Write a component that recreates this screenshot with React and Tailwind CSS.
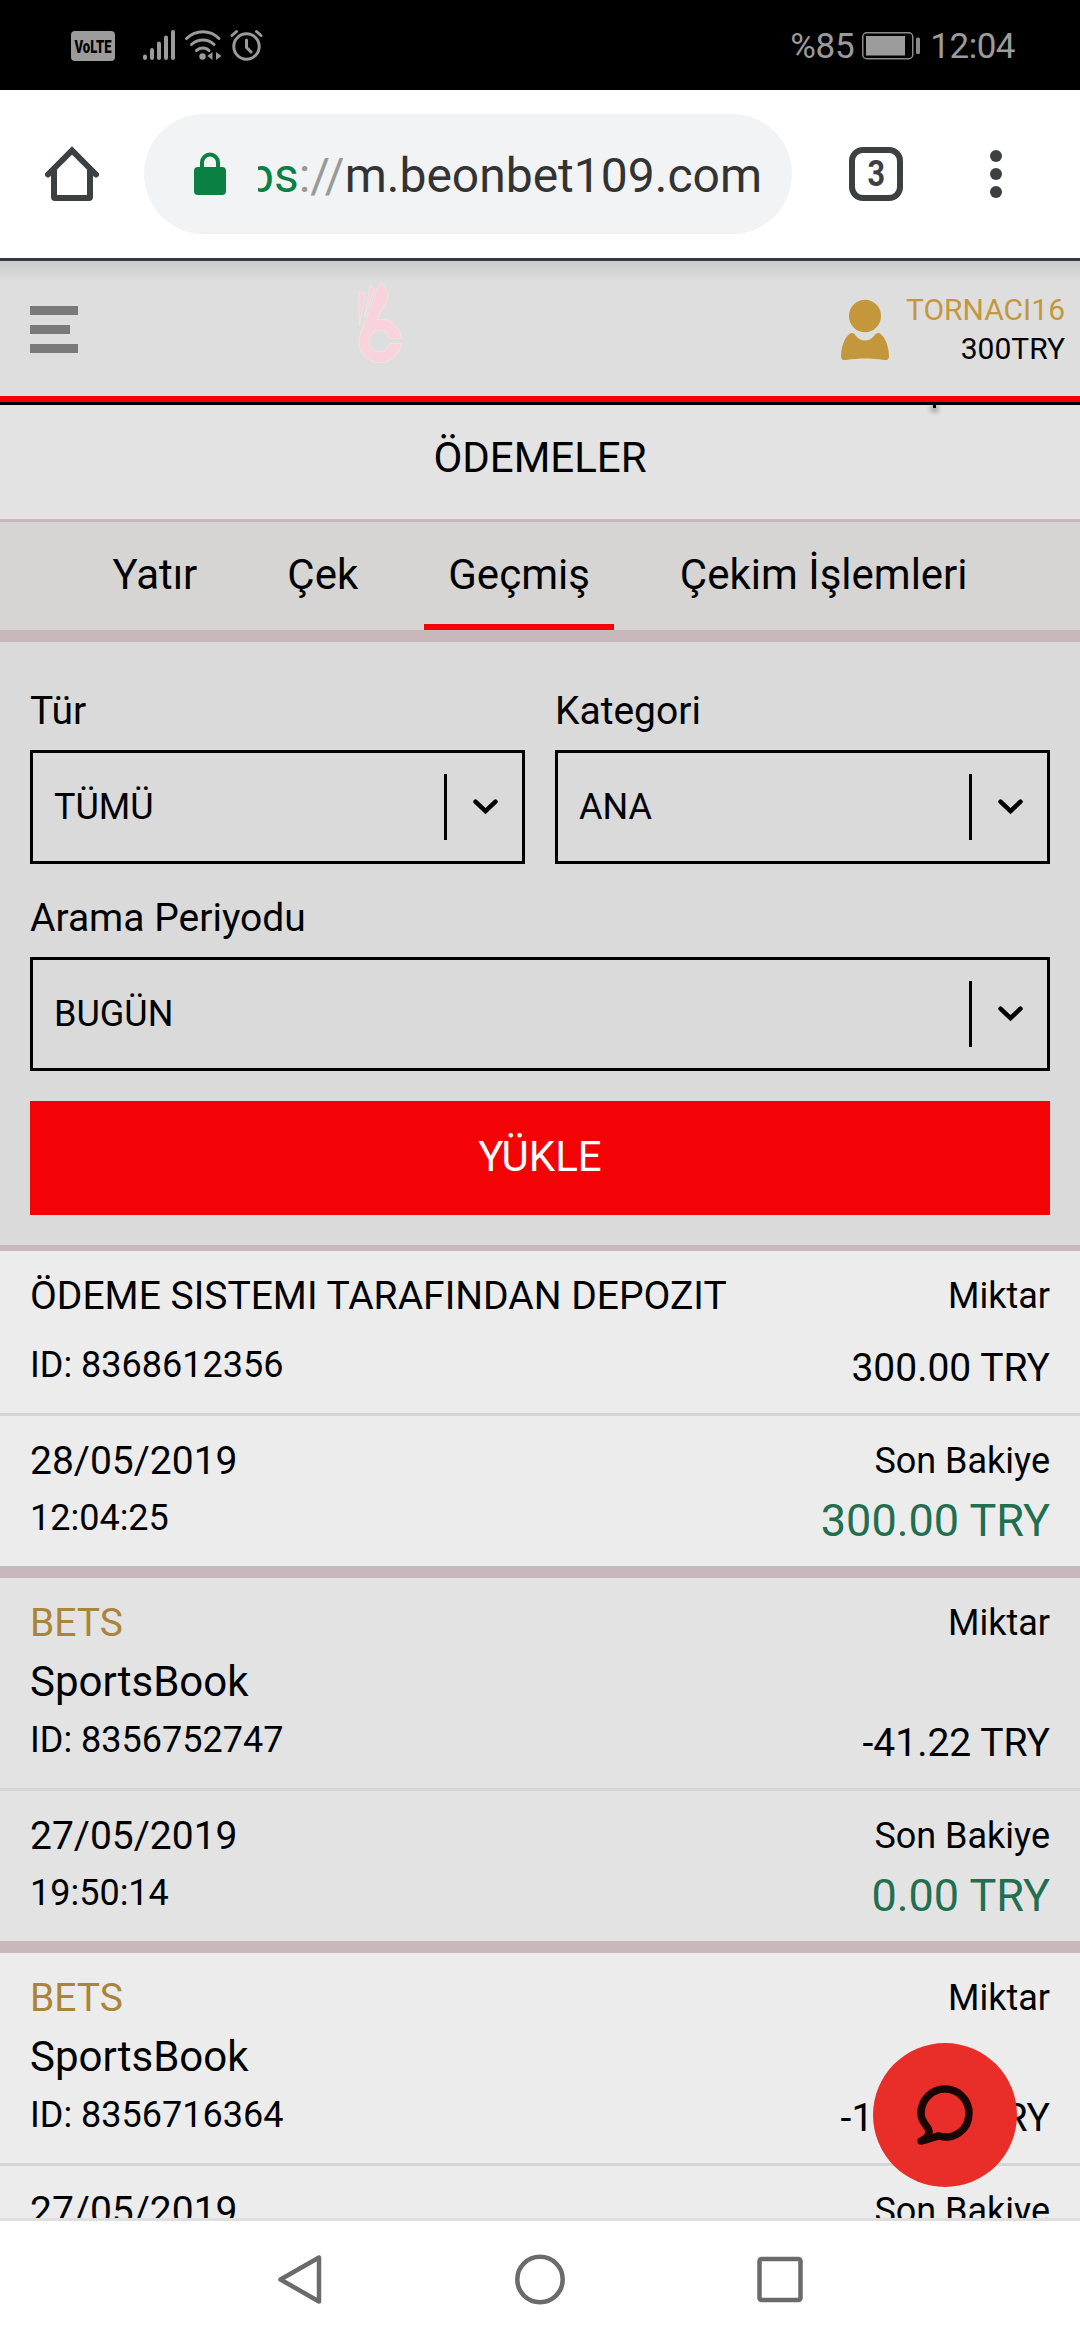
import React, { useState } from "react";

const tabs = ["Yatır", "Çek", "Geçmiş", "Çekim İşlemleri"];

const transactions = [
    {
        title: "ÖDEME SISTEMI TARAFINDAN DEPOZIT",
        id: "8368612356",
        amount: "300.00",
        date: "28/05/2019",
        time: "12:04:25",
        balance: "300.00",
    },
    {
        title: "BETS",
        product: "SportsBook",
        id: "8356752747",
        amount: "-41.22",
        date: "27/05/2019",
        time: "19:50:14",
        balance: "0.00",
    },
    {
        title: "BETS",
        product: "SportsBook",
        id: "8356716364",
        amount: "-100.00",
        date: "27/05/2019",
        time: "19:42:51",
        balance: "41.22",
    },
];

const StatusBar = () => (
    <div className="flex h-[90px] shrink-0 items-center justify-between bg-black pl-[71px] pr-[65px] text-[#9b9b9b]">
        <div className="flex items-center">
            <svg className="mt-0.5" width="44" height="30" viewBox="0 0 44 30">
                <rect width="44" height="30" rx="4" fill="#9b9b9b" />
                <text
                    x="3.5"
                    y="21.5"
                    textLength="37"
                    lengthAdjust="spacingAndGlyphs"
                    fontSize="19"
                    fontWeight="900"
                    fontFamily="Roboto, sans-serif"
                    fill="#000"
                >
                    VoLTE
                </text>
            </svg>
            <svg className="ml-[27px]" width="34" height="32" viewBox="0 0 34 32" stroke="currentColor" strokeWidth="4" strokeLinecap="round">
                <path d="M3 27.5v1.5M10 21v8M17 14.500v14.500M24 8.500v20.500M31 3v26" />
            </svg>
            <svg className="ml-2" width="38" height="32" viewBox="0 0 38 32" fill="none" stroke="currentColor" strokeWidth="3" strokeLinecap="round">
                <path d="M2.500 9.500C12 0.500 26 0.500 35 9.500M7.500 15.500C14 9.500 24 9.500 30 15.500M12.500 21.500C16 18 22 18 25 21.500" />
                <circle cx="18.500" cy="27.500" r="3.200" fill="currentColor" stroke="none" />
                <path d="M28.500 23v8l-5-4zM32 23v8l5.500-4z" fill="currentColor" stroke="none" />
            </svg>
            <svg className="ml-2" width="33" height="32" viewBox="0 0 33 32" fill="none" stroke="currentColor" strokeWidth="3" strokeLinecap="round">
                <circle cx="16.500" cy="17.500" r="12.700" />
                <path d="M16.500 11v7.500l4.500 4.500M2 6.500l4.500-4M31 6.500l-4.500-4" />
            </svg>
        </div>
        <div className="flex items-center pt-0.5 text-[35px] leading-none">
            <span className="tracking-[-0.3px]">%85</span>
            <svg className="ml-2 mr-[9px]" width="59" height="28" viewBox="0 0 59 28" fill="none">
                <rect x="0.750" y="0.750" width="50" height="26" rx="4" stroke="#8a8a8a" strokeWidth="1.500" />
                <rect x="4" y="4" width="39" height="19.500" fill="#9b9b9b" />
                <rect x="54" y="5.500" width="4" height="16.500" rx="1.500" fill="#8a8a8a" />
            </svg>
            <span className="tracking-[-0.5px]">12:04</span>
        </div>
    </div>
);

const BrowserBar = () => (
    <div className="flex h-[171px] shrink-0 items-center border-b-[3px] border-[#343a43] bg-white pl-[45px] pr-[78px]">
        <svg width="54" height="56" viewBox="0 0 54 56" fill="none" stroke="#3c4043" strokeWidth="6">
            <path d="M3 28.500L27 4.500l24 24" strokeLinecap="round" />
            <path d="M9 24v27q0 1 1 1h34q1 0 1-1V24" />
        </svg>
        <div className="ml-[45px] flex h-[120px] w-[648px] items-center rounded-full bg-[#f1f3f4] pl-[50px] pr-[30px]">
            <svg width="32" height="44" viewBox="0 0 32 44">
                <path d="M8 16v-5.500a8 8 0 0 1 16 0V16" fill="none" stroke="#0b8043" strokeWidth="4" />
                <rect y="15" width="32" height="28" rx="4" fill="#0b8043" />
            </svg>
            <div className="ml-8 flex flex-1 justify-end overflow-hidden pt-1 text-[48px] leading-[60px] whitespace-nowrap">
                <span className="text-[#0b8043]">https</span>
                <span className="text-[#999]">://</span>
                <span className="text-[#333]">m.beonbet109.com</span>
            </div>
        </div>
        <div className="ml-[57px] flex h-[54px] w-[54px] items-center justify-center rounded-[14px] border-[6px] border-[#3c4043] text-[36px] font-bold leading-none text-[#3c4043]">
            <span className="inline-block scale-x-85">3</span>
        </div>
        <div className="ml-auto flex flex-col gap-1.5">
            <span className="h-3 w-3 rounded-full bg-[#3c4043]" />
            <span className="h-3 w-3 rounded-full bg-[#3c4043]" />
            <span className="h-3 w-3 rounded-full bg-[#3c4043]" />
        </div>
    </div>
);

const SiteHeader = () => (
    <div className="relative flex h-[144px] shrink-0 border-b-[3px] border-black bg-[#dedede]">
        <div className="flex w-full border-b-[6px] border-[#f20305] bg-linear-to-b from-[#cacaca] to-transparent to-[20px] pl-[30px] pr-[15px]">
            <div className="flex flex-col gap-2.5 pt-[45px]">
                <span className="h-[9px] w-12 bg-[#7a7a7a]" />
                <span className="h-[9px] w-10 bg-[#7a7a7a]" />
                <span className="h-[9px] w-12 bg-[#7a7a7a]" />
            </div>
            <svg className="ml-[277px] mt-[19px]" width="50" height="85" viewBox="75 30 150 255" fill="#f8d3db" stroke="#f7e9ec" strokeWidth="1.500">
                <path d="M152 40C165 47 174 62 173 80C170 102 150 125 142 149C180 142 212 170 213 206L180 206C175 190 163 181 149 181A32 32 0 1 0 180 220L213 220C210 255 180 278 149 278C112 278 86 247 87 212C88 193 96 180 103 160C115 130 125 98 137 65C142 52 146 44 152 40Z" />
                <path d="M119 47L132 56L129 68L103 142L113 90ZM87 64L105 71L101 102L88 165Z" />
            </svg>
            <svg className="ml-auto mt-[38px]" width="48" height="62" viewBox="0 0 48 62" fill="#c4973d">
                <ellipse cx="24" cy="17" rx="16" ry="16.300" />
                <path d="M9 34.500C11 33.500 13 34 15 37C20 43 28 43 33 37C35 34 37 33.500 39 34.500C44.500 38 48 49 48 57C48 60.500 46 61.500 43 61C30 59 18 59 5 61C2 61.500 0 60.500 0 57C0 49 3.500 38 9 34.500Z" />
            </svg>
            <div className="ml-[17px] flex flex-col pt-[29px] text-right text-[30px] leading-[39px]">
                <span className="text-[#c4973d]">TORNACI16</span>
                <span>300TRY</span>
            </div>
        </div>
        <span className="absolute left-[933px] top-[144px] h-[3px] w-[3px] bg-black shadow-[0_2px_5px_2px_rgba(0,0,0,0.3)]" />
    </div>
);

const SelectField = ({ label, value }) => (
    <div className="flex flex-1 flex-col">
        <label className="mb-[9px] h-[60px] text-[39px] leading-[60px]">{label}</label>
        <div className="flex h-[114px] items-center border-[3px] border-black pl-[21px] pr-6">
            <span className="flex-1 text-[36px] leading-[54px]">{value}</span>
            <span className="h-[66px] w-[3px] bg-black" />
            <svg className="ml-[26px]" width="25" height="16" viewBox="0 0 25 16" fill="none" stroke="#000" strokeWidth="4.500" strokeLinecap="round">
                <path d="M2.500 2.700l10 9.500 10-9.500" />
            </svg>
        </div>
    </div>
);

const Transaction = ({ item, odd }) => (
    <div className={`shrink-0 border-b-[12px] border-[#c9b8bb] ${odd ? "bg-[#e3e3e3]" : "bg-[#ececec]"}`}>
        {/* Title, id and amount */}
        <div className={`flex justify-between border-b-[3px] border-[#d5d5d4] px-[30px] pt-4 ${item.product ? "h-[213px]" : "h-[165px]"}`}>
            <div className="flex flex-col justify-between pb-[21px]">
                <div className="flex flex-col">
                    <span className={`text-[39px] leading-[58px] ${item.product ? "text-[#ab843b]" : ""}`}>{item.title}</span>
                    {item.product && <span className="text-[42px] leading-[60px]">{item.product}</span>}
                </div>
                <span className="text-[36px] leading-[54px]">ID: {item.id}</span>
            </div>
            <div className="flex flex-col justify-between pb-[18px] text-right">
                <span className="text-[36px] leading-[58px]">Miktar</span>
                <span className="text-[39px] leading-[54px]">{item.amount} TRY</span>
            </div>
        </div>

        {/* Date and balance */}
        <div className="flex h-[150px] justify-between px-[30px] pt-4">
            <div className="flex flex-col">
                <span className="text-[39px] leading-[58px]">{item.date}</span>
                <span className="text-[36px] leading-[56px]">{item.time}</span>
            </div>
            <div className="flex flex-col text-right">
                <span className="text-[36px] leading-[58px]">Son Bakiye</span>
                <span className="text-[45px] leading-[62px] text-[#216e50]">{item.balance} TRY</span>
            </div>
        </div>
    </div>
);

const NavBar = () => (
    <div className="flex h-[122px] shrink-0 items-center justify-center gap-[190px] border-t-[3px] border-[#dfdfdf] bg-white pb-0.5">
        <svg width="50" height="52" viewBox="0 0 50 52" fill="none" stroke="#6b6b6b" strokeWidth="4.500" strokeLinejoin="round">
            <path d="M5.500 25.500L44 3.500v44z" />
        </svg>
        <svg width="50" height="52" viewBox="0 0 50 52" fill="none" stroke="#6b6b6b" strokeWidth="4.500">
            <circle cx="25" cy="25.500" r="22.700" />
        </svg>
        <svg width="50" height="52" viewBox="0 0 50 52" fill="none" stroke="#6b6b6b" strokeWidth="4.500">
            <rect x="4.500" y="5" width="41" height="41" rx="2" />
        </svg>
    </div>
);

const App = () => {
    const [activeTab, setActiveTab] = useState("Geçmiş");

    return (
        <div className="flex h-[2340px] w-[1080px] flex-col overflow-hidden bg-white font-['Roboto',sans-serif] text-black">
            <StatusBar />
            <BrowserBar />

            <div className="relative flex min-h-0 flex-1 flex-col overflow-hidden">
                <SiteHeader />

                <h1 className="flex h-[117px] shrink-0 items-center justify-center border-b-[3px] border-[#c9b8bb] bg-[#e3e3e3] pt-px pb-2.5 text-[42px] leading-[60px]">
                    ÖDEMELER
                </h1>

                {/* Tabs */}
                <div className="flex h-[120px] shrink-0 justify-center gap-[42px] border-b-[12px] border-[#c9b8bb] bg-[#d6d5d3]">
                    {tabs.map((tab) => (
                        <button
                            key={tab}
                            onClick={() => setActiveTab(tab)}
                            className={`border-b-[6px] px-6 pt-[3px] text-[42px] leading-[60px] ${activeTab === tab ? "border-[#f20305]" : "border-transparent"}`}
                        >
                            {tab}
                        </button>
                    ))}
                </div>

                {/* Filters */}
                <div className="flex h-[609px] shrink-0 flex-col border-b-[6px] border-[#c9b8bb] bg-[#dadada] px-[30px] pt-[39px]">
                    <div className="flex gap-[30px]">
                        <SelectField label="Tür" value="TÜMÜ" />
                        <SelectField label="Kategori" value="ANA" />
                    </div>
                    <div className="mt-6 flex">
                        <SelectField label="Arama Periyodu" value="BUGÜN" />
                    </div>
                    <button className="mt-[30px] h-[114px] bg-[#f30305] pb-0.5 text-[42px] leading-[60px] text-white">
                        YÜKLE
                    </button>
                </div>

                {transactions.map((item, i) => (
                    <Transaction key={item.id} item={item} odd={i % 2 === 1} />
                ))}

                {/* Live chat */}
                <button className="absolute right-[63px] bottom-[31px] flex h-36 w-36 items-center justify-center rounded-full bg-[#e92d28]">
                    <svg width="64" height="64" viewBox="0 0 64 64" fill="none" stroke="#1a0505" strokeWidth="7.500" strokeLinejoin="round">
                        <path d="M8 58C14 57 20 54 26 53C40 57 56 48 56 30A24 24 0 1 0 8 30C8 41 17 44 16 49C16 53 12 56 8 58Z" />
                    </svg>
                </button>
            </div>

            <NavBar />
        </div>
    );
};

export default App;
